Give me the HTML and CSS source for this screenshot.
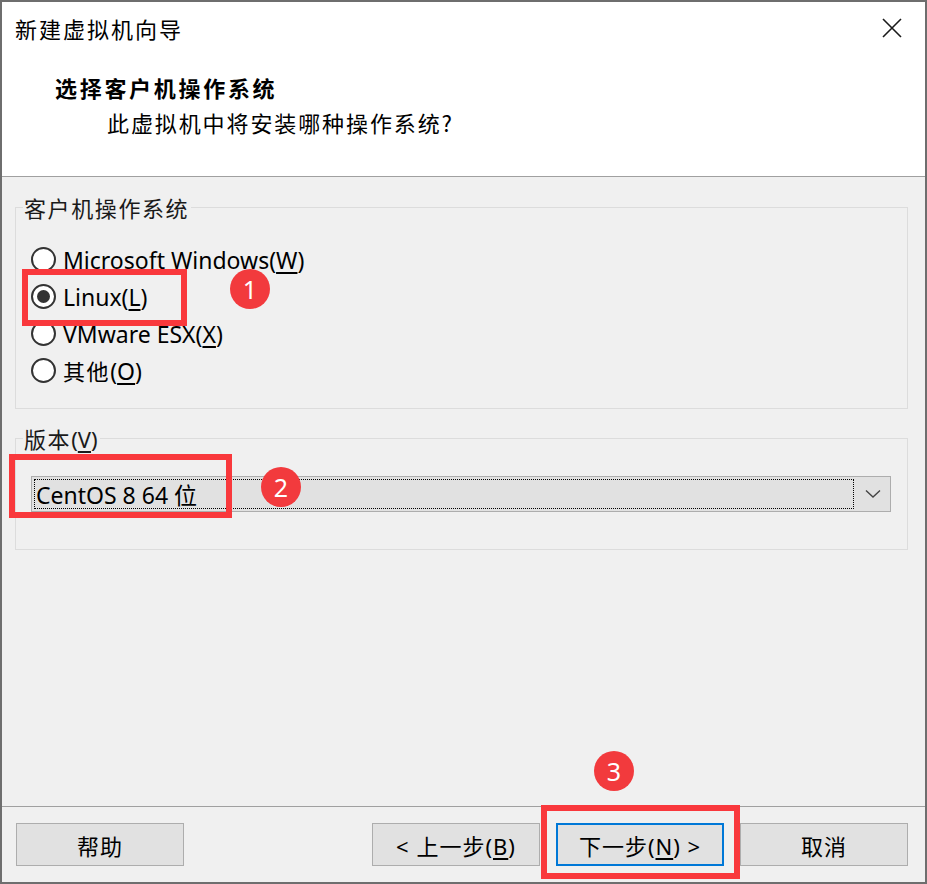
FILE: index.html
```html
<!DOCTYPE html>
<html lang="zh-CN">
<head>
<meta charset="utf-8">
<title>新建虚拟机向导</title>
<link rel="stylesheet" href="styles.css">
</head>
<body>
<div class="window">
  <div class="header">
    <div class="titlebar">
      <span class="title">新建虚拟机向导</span>
      <svg class="close" width="20" height="20" viewBox="0 0 20 20"><path d="M1 1 L19 19 M19 1 L1 19" stroke="#1a1a1a" stroke-width="1.6" fill="none"/></svg>
    </div>
    <div class="heading">选择客户机操作系统</div>
    <div class="subheading">此虚拟机中将安装哪种操作系统?</div>
  </div>

  <div class="content">
    <fieldset class="group group-os">
      <legend class="legend">客户机操作系统</legend>
      <div class="radio-row"><span class="radio"></span><span class="rtext">Microsoft Windows(<u>W</u>)</span></div>
      <div class="radio-row"><span class="radio checked"></span><span class="rtext">Linux(<u>L</u>)</span></div>
      <div class="radio-row"><span class="radio"></span><span class="rtext">VMware ESX(<u>X</u>)</span></div>
      <div class="radio-row"><span class="radio"></span><span class="rtext"><span class="cjk">其他</span>(<u>O</u>)</span></div>
    </fieldset>

    <fieldset class="group group-ver">
      <legend class="legend"><span class="cjk">版本</span>(<u>V</u>)</legend>
      <div class="combo">
        <div class="combo-value"><span>CentOS 8 64 位</span></div>
        <div class="combo-arrow">
          <svg width="16" height="10" viewBox="0 0 16 10"><path d="M1 1.5 L8 8 L15 1.5" stroke="#444" stroke-width="1.4" fill="none"/></svg>
        </div>
      </div>
    </fieldset>
  </div>

  <div class="footer">
    <button class="btn">帮助</button>
    <div class="spacer"></div>
    <button class="btn">&lt; 上一步(<u>B</u>)</button>
    <button class="btn btn-default">下一步(<u>N</u>) &gt;</button>
    <button class="btn">取消</button>
  </div>

  <div class="mark mark-1"></div>
  <div class="mark mark-2"></div>
  <div class="mark mark-3"></div>
  <div class="badge badge-1">1</div>
  <div class="badge badge-2">2</div>
  <div class="badge badge-3">3</div>
</div>
</body>
</html>
```

FILE: styles.css
```css
* { box-sizing: border-box; }
html, body { margin: 0; padding: 0; }
body {
  font-family: "Noto Sans", "Noto Sans CJK SC", sans-serif;
  font-size: 23px;
  color: #000;
  background: #fff;
}
.window {
  position: relative;
  width: 927px;
  height: 884px;
  border: 2px solid #6e6e6e;
  background: #f0f0f0;
  display: flex;
  flex-direction: column;
}
.header {
  height: 175px;
  background: #fff;
  border-bottom: 1px solid #a0a0a0;
  flex: none;
}
.titlebar {
  height: 52px;
  display: flex;
  align-items: center;
  justify-content: space-between;
  padding: 0 23px 0 13px;
}
.title {
  font-family: "Noto Sans CJK SC", sans-serif;
  font-size: 22px;
  letter-spacing: 2px;
}
.close { display: block; }
.heading {
  margin-top: 18px;
  padding-left: 53px;
  line-height: 30px;
  font-family: "Noto Sans CJK SC", sans-serif;
  font-weight: bold;
  font-size: 22px;
  letter-spacing: 2.7px;
}
.subheading {
  margin-top: 5px;
  padding-left: 105px;
  line-height: 30px;
  font-family: "Noto Sans CJK SC", sans-serif;
  font-size: 22px;
  letter-spacing: 1.9px;
}
.content {
  flex: 1;
  padding: 18px 17px 0 13px;
}
.group {
  margin: 0;
  border: 1px solid #dcdcdc;
  min-width: 0;
}
.legend {
  margin-left: -8px;
  padding: 0 2px 0 1px;
  line-height: 24px;
  font-size: 22px;
  color: #1a1a1a;
}
.group-os .legend, .cjk {
  font-family: "Noto Sans CJK SC", sans-serif;
  letter-spacing: 1.6px;
}
.group-os {
  height: 214px;
  padding: 22px 0 0 15px;
}
.group-ver {
  margin-top: 17px;
  height: 124px;
  padding: 25px 16px 0 15px;
}
.radio-row {
  height: 37px;
  display: flex;
  align-items: center;
  gap: 7px;
}
.radio {
  width: 25px;
  height: 25px;
  border: 2px solid #333;
  border-radius: 50%;
  background: #fff;
  display: flex;
  align-items: center;
  justify-content: center;
  flex: none;
}
.radio.checked::after {
  content: "";
  width: 13px;
  height: 13px;
  border-radius: 50%;
  background: #333;
}
.rtext { line-height: 30px; }
.rtext .cjk { font-size: 22px; }
u { text-decoration-thickness: 1.5px; text-underline-offset: 3px; }
.combo {
  height: 36px;
  display: flex;
  background: #e1e1e1;
  border: 1px solid #adadad;
}
.combo-value {
  flex: 1;
  margin: 2px 0 2px 2px;
  border: 1px dotted #000;
  display: flex;
  align-items: center;
  padding-left: 1px;
}
.combo-arrow {
  width: 36px;
  display: flex;
  align-items: center;
  justify-content: center;
  padding-left: 2px;
}
.combo-arrow svg { display: block; }
.footer {
  flex: none;
  height: 76px;
  border-top: 1px solid #a0a0a0;
  display: flex;
  align-items: flex-start;
  gap: 16px;
  padding: 16px 17px 0 14px;
}
.spacer { flex: 1; }
.btn {
  width: 168px;
  height: 43px;
  background: #e1e1e1;
  border: 1px solid #adadad;
  font-family: "Noto Sans", "Noto Sans CJK SC", sans-serif;
  font-size: 22px;
  color: #000;
  padding: 0;
  letter-spacing: 1px;
}
.btn-default {
  border: 2px solid #0078d7;
}
.mark {
  position: absolute;
  border: 6px solid #f9383c;
}
.mark-1 { left: 20px; top: 267px; width: 165px; height: 57px; }
.mark-2 { left: 7px; top: 452px; width: 223px; height: 64px; }
.mark-3 { left: 539px; top: 803px; width: 199px; height: 74px; }
.badge {
  position: absolute;
  width: 40px;
  height: 40px;
  border-radius: 50%;
  background: #f23a3d;
  color: #fff;
  font-size: 25px;
  display: flex;
  align-items: center;
  justify-content: center;
  font-family: "Noto Sans", sans-serif;
}
.badge-1 { left: 228px; top: 267px; }
.badge-2 { left: 259px; top: 465px; }
.badge-3 { left: 592px; top: 749px; }
```
